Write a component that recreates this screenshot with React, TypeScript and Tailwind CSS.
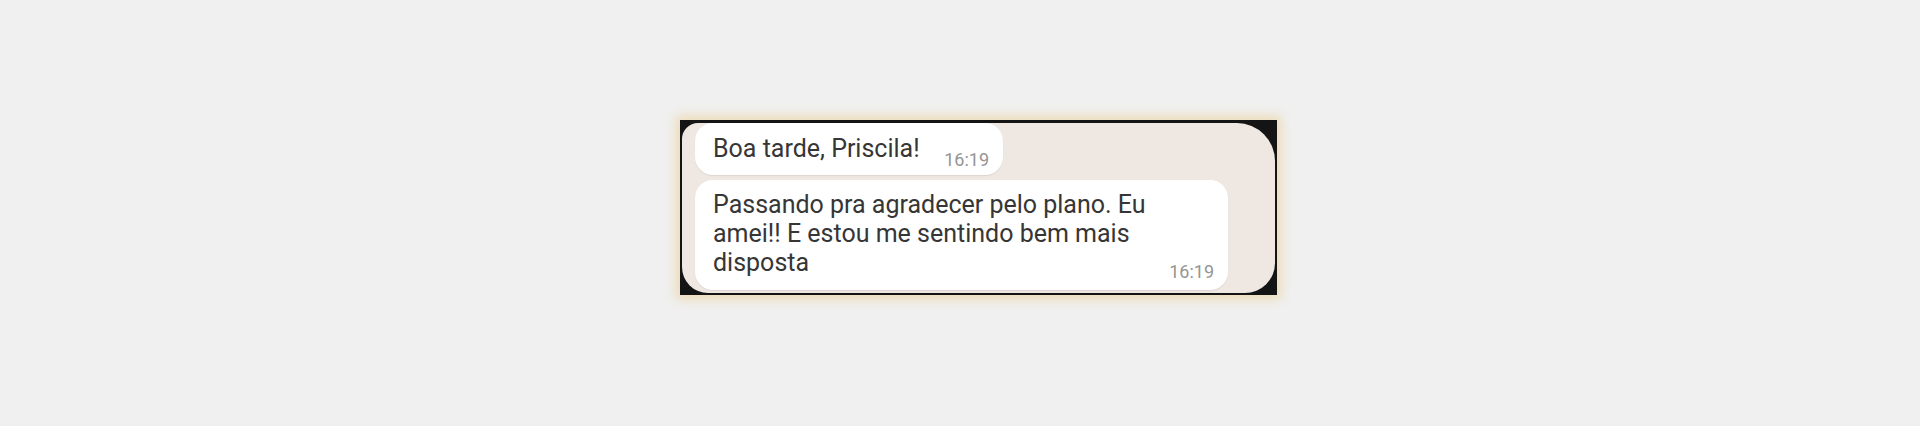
import React from 'react';

const Time = ({ children }: { children: React.ReactNode }) => (
  <span className="text-[18px] leading-[20px] text-[#959595] whitespace-nowrap">{children}</span>
);

const App = () => {
  return (
    <div className="w-full h-[426px] bg-[#f0f0f0] pl-[680px] pt-[120px]" style={{ fontFamily: 'Roboto, "Noto Sans", sans-serif' }}>
      <div className="w-[597px] h-[175px] bg-[#141414] pt-[3px] pb-[2px] px-[2px] shadow-[0_0_10px_4px_rgba(236,214,168,0.8)]">
        <div className="h-full bg-[#efe8e2] rounded-tl-[16px] rounded-tr-[38px] rounded-br-[30px] rounded-bl-[26px] pl-[13px] flex flex-col gap-[5px]">
          <div className="w-[308px] h-[52px] bg-white rounded-[18px] shadow-[0_1px_1px_rgba(0,0,0,0.08)] flex items-end justify-between pl-[18px] pr-[14px] pb-[5px]">
            <span className="text-[25px] leading-[29px] text-[#363636] mb-[7px]">Boa tarde, Priscila!</span>
            <Time>16:19</Time>
          </div>
          <div className="w-[533px] h-[110px] bg-white rounded-[18px] shadow-[0_1px_1px_rgba(0,0,0,0.08)] flex items-end justify-between pl-[18px] pr-[14px] pt-[10px] pb-[8px]">
            <div className="text-[25px] leading-[29px] text-[#363636] self-start">
              <div>Passando pra agradecer pelo plano. Eu</div>
              <div>amei!! E estou me sentindo bem mais</div>
              <div>disposta</div>
            </div>
            <Time>16:19</Time>
          </div>
        </div>
      </div>
    </div>
  );
};

export default App;
